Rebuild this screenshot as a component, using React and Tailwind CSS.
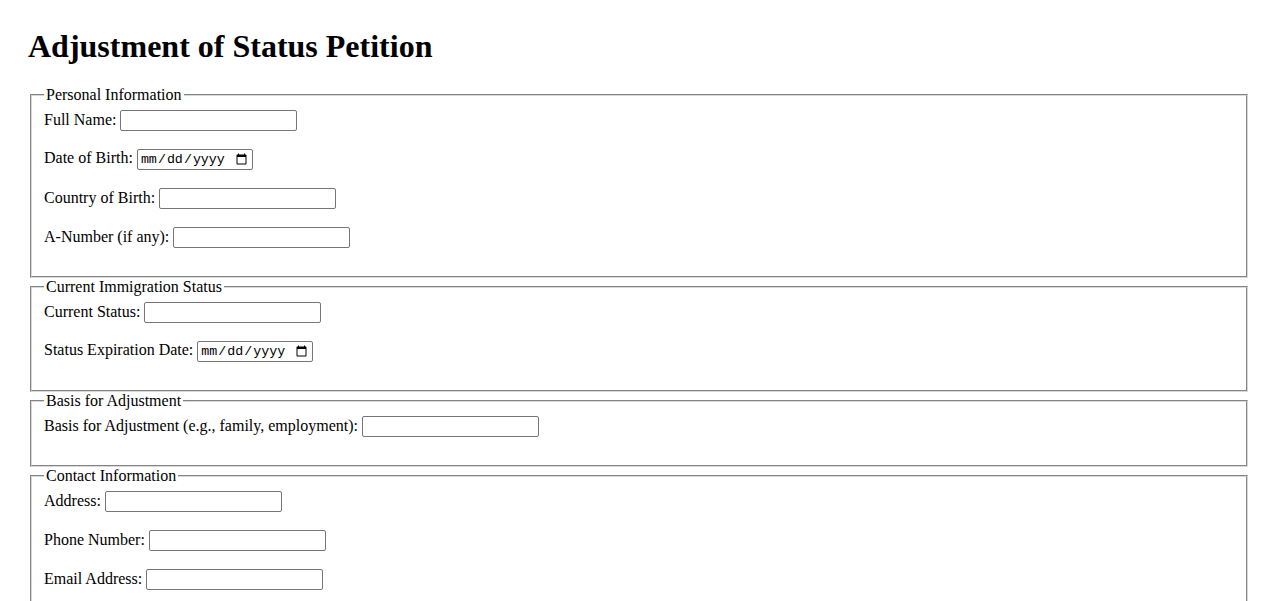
const sections = [
  {
    legend: 'Personal Information',
    fields: [
      { label: 'Full Name:', type: 'text' },
      { label: 'Date of Birth:', type: 'date' },
      { label: 'Country of Birth:', type: 'text' },
      { label: 'A-Number (if any):', type: 'text' },
    ],
  },
  {
    legend: 'Current Immigration Status',
    fields: [
      { label: 'Current Status:', type: 'text' },
      { label: 'Status Expiration Date:', type: 'date' },
    ],
  },
  {
    legend: 'Basis for Adjustment',
    fields: [{ label: 'Basis for Adjustment (e.g., family, employment):', type: 'text' }],
  },
  {
    legend: 'Contact Information',
    fields: [
      { label: 'Address:', type: 'text' },
      { label: 'Phone Number:', type: 'text' },
      { label: 'Email Address:', type: 'text' },
    ],
  },
]

function Field({ label, type }) {
  if (type === 'date') {
    return (
      <div className="h-[39px]">
        <label>{label}</label>{' '}
        <input
          type="date"
          className="box-border h-[21px] w-[116px] rounded-[2px] border border-[#767676] bg-white px-[2px] align-baseline font-['Liberation_Mono',monospace] text-[13.33px] text-black"
        />
      </div>
    )
  }
  return (
    <div className="h-[39px]">
      <label>{label}</label>{' '}
      <input
        type="text"
        className="box-border h-[21px] w-[177px] rounded-[2px] border border-[#767676] bg-white px-[3px] align-baseline font-['Liberation_Sans',Arial,sans-serif] text-[13.33px] text-black"
      />
    </div>
  )
}

export default function App() {
  return (
    <div className="min-h-screen bg-white px-[28px] pt-[28px] font-['Liberation_Serif','Times_New_Roman',serif] text-[16px] leading-[normal] text-black">
      <h1 className="mb-[21px] text-[32px] font-bold leading-[37px]">
        Adjustment of Status Petition
      </h1>
      <form>
        {sections.map((section) => (
          <fieldset
            key={section.legend}
            className="mx-[2px] border-2 border-[#d8d8d8] px-[12px] pt-[6px] pb-[10px] [border-style:groove]"
          >
            <legend className="px-[2px] leading-[18px]">{section.legend}</legend>
            {section.fields.map((field) => (
              <Field key={field.label} {...field} />
            ))}
          </fieldset>
        ))}
      </form>
    </div>
  )
}
